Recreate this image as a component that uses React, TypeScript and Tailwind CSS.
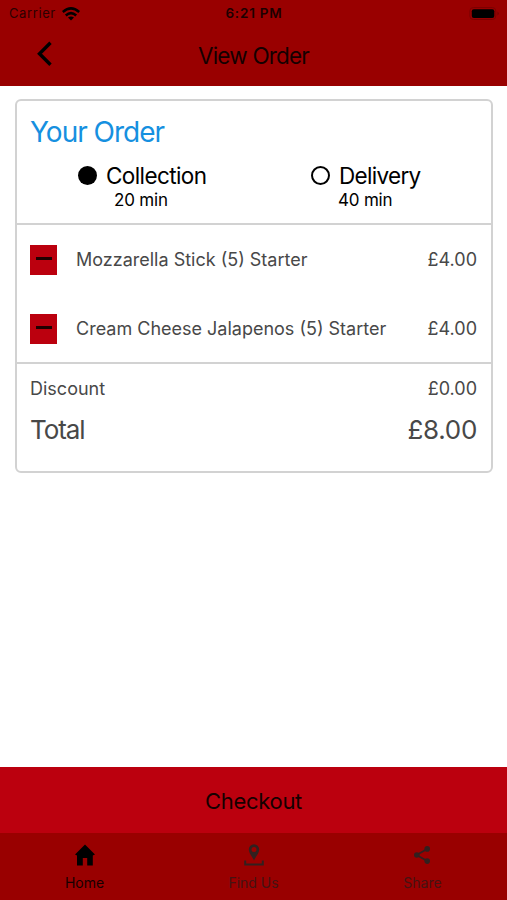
type OrderItem = {
    name: string;
    price: string;
};

const items: OrderItem[] = [
    { name: "Mozzarella Stick (5) Starter", price: "£4.00" },
    { name: "Cream Cheese Jalapenos (5) Starter", price: "£4.00" },
];

function WifiIcon() {
    return (
        <svg className="ml-[6px] h-[14px] w-[18px]" viewBox="0 0 18 14" fill="none" stroke="currentColor" strokeWidth="2.5">
            <path d="M0.8 5 Q9 -2.2 17.2 5" />
            <path d="M3.8 8.5 Q9 3.7 14.2 8.5" />
            <path d="M9 13.6 L6 10.6 Q9 8.2 12 10.6 Z" fill="currentColor" stroke="none" />
        </svg>
    );
}

function HomeIcon() {
    return (
        <svg className="h-[22px] w-[20px]" viewBox="0 0 20 22" fill="currentColor">
            <path d="M10 0.5 L20 10.6 L17.8 11.6 V21.5 H12.2 V14 H7.8 V21.5 H2 V11.6 L0 10.6 Z" />
        </svg>
    );
}

function FindIcon() {
    return (
        <svg className="h-[22px] w-[20px]" viewBox="0 0 20 22" fill="currentColor">
            <path
                fillRule="evenodd"
                d="M10 0.3 A5.2 5.2 0 0 1 15.2 5.5 C15.2 9 12 12.2 10 16.4 C8 12.2 4.8 9 4.8 5.5 A5.2 5.2 0 0 1 10 0.3 Z M10 3 A2.5 2.5 0 1 0 10 8 A2.5 2.5 0 1 0 10 3 Z"
            />
            <path d="M1.2 16.5 V20.4 H18.8 V16.5" fill="none" stroke="currentColor" strokeWidth="2" />
        </svg>
    );
}

function ShareIcon() {
    return (
        <svg className="h-[22px] w-[18px]" viewBox="0 0 18 22" fill="currentColor">
            <path d="M13.2 5 L2.6 11 L13.2 17" fill="none" stroke="currentColor" strokeWidth="1.9" />
            <circle cx="13.2" cy="4.9" r="2.8" />
            <circle cx="2.8" cy="11" r="2.8" />
            <circle cx="13.2" cy="17.1" r="2.8" />
        </svg>
    );
}

const tabs = [
    { label: "Home", icon: <HomeIcon />, iconColor: "text-black", labelColor: "text-[#150000]" },
    { label: "Find Us", icon: <FindIcon />, iconColor: "text-[#32201f]", labelColor: "text-[#451313]" },
    { label: "Share", icon: <ShareIcon />, iconColor: "text-[#32201f]", labelColor: "text-[#451313]" },
];

export default function App() {
    return (
        <div className="flex h-[900px] w-[507px] flex-col overflow-hidden bg-white font-['Inter','Liberation_Sans',sans-serif] text-black">
            {/* Status bar and title */}
            <header className="h-[86px] shrink-0 bg-[#990000]">
                <div className="grid h-[27px] grid-cols-3 items-center pr-[7px] pl-[9px] text-[13px] leading-none">
                    <div className="flex items-center">
                        <span className="tracking-[0.6px] text-[#2b0000]">Carrier</span>
                        <WifiIcon />
                    </div>
                    <span className="pr-px pt-px text-center text-[13.5px] font-semibold tracking-[0.8px] text-[#1c0000]">6:21 PM</span>
                    <svg className="h-[13px] w-[31px] justify-self-end" viewBox="0 0 31 13">
                        <rect x="0.8" y="0.5" width="26" height="12" rx="3.5" fill="none" stroke="#7c0000" />
                        <rect x="2.8" y="2.2" width="22.5" height="8.8" rx="2" />
                        <path d="M28.5 4.5 Q31 6.5 28.5 8.5 Z" fill="#720000" />
                    </svg>
                </div>
                <div className="grid h-[54px] grid-cols-3 items-center">
                    <button className="ml-[36px] w-[17px]" aria-label="Back">
                        <svg className="h-[26px] w-[17px]" viewBox="0 0 17 26" fill="none" stroke="currentColor" strokeWidth="3.4">
                            <path d="M14.5 1.8 L3.5 12.8 L14.5 23.8" />
                        </svg>
                    </button>
                    <h1 className="pt-1 text-center text-[22.5px] tracking-[-0.8px] whitespace-nowrap text-[#150000]">
                        View Order
                    </h1>
                </div>
            </header>

            <main className="flex-1 pt-[13px] pr-[14px] pl-[15px]">
                <section className="h-[374px] rounded-[6px] border-2 border-[#d2d2d2] text-[#484848]">
                    <div className="h-[124px] border-b-2 border-[#d2d2d2] px-[13px] pt-[14px] text-black">
                        <h2 className="text-[28px] leading-[34px] tracking-[-1px] text-[#1690e0]">Your Order</h2>
                        <div className="grid grid-cols-2 pt-[14px]">
                            <div className="pl-[48px]">
                                <div className="flex items-center">
                                    <span className="mr-[9px] mb-0.5 size-[19px] rounded-full bg-black" />
                                    <span className="text-[22.5px] leading-[26px] tracking-[-0.6px]">Collection</span>
                                </div>
                                <div className="pl-[36px] text-[17px] leading-[22px] tracking-[-0.2px]">20 min</div>
                            </div>
                            <div className="pl-[57px]">
                                <div className="flex items-center">
                                    <span className="mr-[9px] mb-0.5 size-[19px] rounded-full border-2 border-black" />
                                    <span className="text-[22.5px] leading-[26px] tracking-[-0.7px]">Delivery</span>
                                </div>
                                <div className="pl-[27px] text-[17px] leading-[22px] tracking-[-0.2px]">40 min</div>
                            </div>
                        </div>
                    </div>

                    {/* Order items */}
                    <ul className="h-[139px] border-b-2 border-[#d2d2d2] text-[18px]">
                        {items.map((item) => (
                            <li key={item.name} className="flex h-[69px] items-center pr-[14px] pl-[13px]">
                                <button
                                    className="mr-[19px] flex h-[30px] w-[27px] items-center justify-center bg-[#bb000e]"
                                    aria-label="Remove item"
                                >
                                    <span className="mb-0.5 h-[3px] w-[16px] bg-[#200000]" />
                                </button>
                                <span>{item.name}</span>
                                <span className="ml-auto">{item.price}</span>
                            </li>
                        ))}
                    </ul>

                    <div className="pt-[11px] pr-[14px] pl-[13px]">
                        <div className="flex justify-between text-[18px] leading-[28px]">
                            <span>Discount</span>
                            <span>£0.00</span>
                        </div>
                        <div className="flex justify-between pt-[10px] text-[26px] leading-[34px]">
                            <span className="tracking-[-1.1px]">Total</span>
                            <span className="tracking-[-0.3px]">£8.00</span>
                        </div>
                    </div>
                </section>
            </main>

            <button className="h-[66px] shrink-0 bg-[#bb000e] pt-0.5 text-[22px] tracking-[-0.3px] text-[#150000]">Checkout</button>

            <nav className="grid h-[67px] shrink-0 grid-cols-3 bg-[#990000]">
                {tabs.map((tab) => (
                    <button key={tab.label} className="flex flex-col items-center pt-[11px]">
                        <span className={tab.iconColor}>{tab.icon}</span>
                        <span className={`mt-[8px] text-[14px] leading-[18px] ${tab.labelColor}`}>{tab.label}</span>
                    </button>
                ))}
            </nav>
        </div>
    );
}
